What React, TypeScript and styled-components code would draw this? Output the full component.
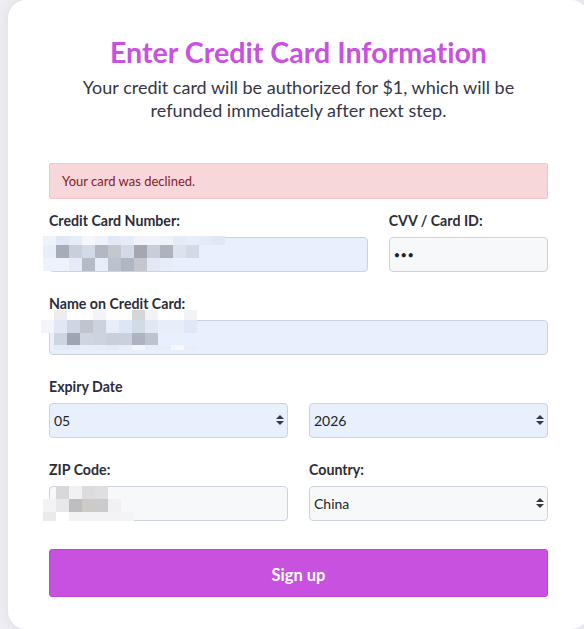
import React from "react";
import styled, { createGlobalStyle } from "styled-components";

const GlobalStyle = createGlobalStyle`
  html, body {
    margin: 0;
    padding: 0;
    height: 629px;
    overflow: hidden;
    background: #eeedf3;
    font-family: "Lato", "Open Sans", sans-serif;
    font-variant-ligatures: none;
  }
  * { box-sizing: border-box; }
`;

const Page = styled.div`
  padding-left: 8px;
  height: 629px;
`;

const Card = styled.div`
  width: 581px;
  height: 629px;
  background: #ffffff;
  border-radius: 18px;
  box-shadow: 0 0 10px rgba(90, 80, 130, 0.1);
  padding: 35px 41px 0 41px;
  display: flex;
  flex-direction: column;
`;

const Title = styled.h1`
  margin: 0;
  font-size: 28.6px;
  line-height: 34px;
  font-weight: 700;
  color: #c852df;
  text-align: center;
  font-variant-ligatures: none;
`;

const Subtitle = styled.p`
  margin: 7px 0 0;
  font-size: 18px;
  line-height: 23px;
  color: #363645;
  text-align: center;
`;

const Alert = styled.div`
  margin-top: 41px;
  height: 36px;
  display: flex;
  align-items: center;
  padding: 0 12px;
  background: #f8d7da;
  border: 1px solid #f3c4c9;
  border-radius: 2px;
  color: #842029;
  font-size: 13px;
`;

const Form = styled.form`
  margin-top: 13px;
  display: flex;
  flex-direction: column;
  gap: 23px;
`;

const Row = styled.div<{ $cols: string }>`
  display: grid;
  grid-template-columns: ${(p) => p.$cols};
  column-gap: 21px;
`;

const Field = styled.div`
  display: flex;
  flex-direction: column;
`;

const Label = styled.label`
  font-size: 14.2px;
  line-height: 17px;
  font-weight: 700;
  color: #2b2d3a;
  margin-bottom: 8px;
`;

const Control = styled.div`
  position: relative;
  height: 35px;
`;

const Input = styled.input<{ $auto?: boolean; $secret?: boolean }>`
  width: 100%;
  height: 35px;
  padding: 0 4px;
  border: 1px solid #cdd3dc;
  border-radius: 4px;
  background: ${(p) => (p.$auto ? "#e8f0fe" : "#f7f8f9")};
  font-family: "Lato", sans-serif;
  font-size: ${(p) => (p.$secret ? "11px" : "14px")};
  letter-spacing: ${(p) => (p.$secret ? "0.5px" : "normal")};
  color: #212529;
  outline: none;
`;

const Select = styled.select<{ $auto?: boolean }>`
  appearance: none;
  -webkit-appearance: none;
  width: 100%;
  height: 35px;
  padding: 0 4px;
  border: 1px solid #cdd3dc;
  border-radius: 4px;
  background: ${(p) => (p.$auto ? "#e8f0fe" : "#f7f8f9")};
  font-family: "Lato", sans-serif;
  font-size: 14px;
  color: #212529;
  outline: none;
`;

const Arrow = styled.svg`
  position: absolute;
  right: 4px;
  top: 12px;
  width: 8px;
  height: 10px;
  pointer-events: none;
`;

const Mosaic = styled.div<{ $left: number; $top: number; $rows: string }>`
  position: absolute;
  left: ${(p) => p.$left}px;
  top: ${(p) => p.$top}px;
  display: grid;
  grid-template-rows: ${(p) => p.$rows};
  pointer-events: none;
`;

const MosaicRow = styled.div`
  display: flex;
`;

const Block = styled.span<{ $c: string }>`
  width: 13px;
  height: 100%;
  background: ${(p) => p.$c};
`;

const Button = styled.button`
  margin-top: 28px;
  height: 48px;
  width: 100%;
  padding: 3px 0 0;
  border: 1px solid #bb47d2;
  border-radius: 3px;
  background: #c852df;
  color: #ffffff;
  font-family: "Lato", sans-serif;
  font-size: 16.5px;
  font-weight: 700;
`;

const SelectArrow = () => (
  <Arrow viewBox="0 0 4 5">
    <path fill="#343a40" d="M2 0L0 2h4zm0 5L0 3h4z" />
  </Arrow>
);

type MosaicData = { left: number; top: number; rows: string; data: string[][] };

const PixelMosaic = ({ left, top, rows, data }: MosaicData) => (
  <Mosaic $left={left} $top={top} $rows={rows}>
    {data.map((r, i) => (
      <MosaicRow key={i}>
        {r.map((c, j) => (
          <Block key={j} $c={c} />
        ))}
      </MosaicRow>
    ))}
  </Mosaic>
);

const T = "transparent";

const cardMosaic: MosaicData = {
  left: -6,
  top: -1,
  rows: "9px 13px 13px",
  data: [
    ["#eef2f9", "#dfe8f7", "#e7edf8", "#f5f7fb", "#eef2f9", "#e2e9f6", "#e5ecf8", "#f0f3f8", "#f0f3f8", "#eef2f9", "#e3eaf8", "#e8eef9", "#e3eaf8", "#e0e8f6"],
    ["#e8eef9", "#a6adb8", "#c9d0dc", "#d3dae6", "#b1b8c4", "#c3c7ce", "#d3dae6", "#a3a8b0", "#c7ced9", "#adb3be", "#dce2ee", "#d3d9e5"],
    ["#edf2fb", "#eef2fb", "#e5ebf7", "#b5bcc6", "#e8eef9", "#bcc3ce", "#b0b7c4", "#c3c7ce", "#e2e8f4", "#e8eef9"],
  ],
};

const nameMosaic: MosaicData = {
  left: -8,
  top: -10,
  rows: "10px 13px 12px 5px",
  data: [
    [T, "#eeecee", "#ffffff", "#ffffff", "#f2f4f7", "#ffffff", "#ffffff", "#d6d5d8", "#f1f3f6", "#ffffff", "#ffffff", "#f1f3f6"],
    ["#f3f5f9", "#e0e8f6", "#ced6e3", "#c0c4cd", "#ccd3df", "#e7edf9", "#dde6f5", "#d2dae6", "#e1e8f4", "#e7edf9", "#e7edf9", "#e0e8f7"],
    [T, "#cdd5e2", "#9ea5b0", "#cfd6e2", "#cdd4df", "#c9d0dc", "#c9d1dd", "#aeb4bf", "#bec4cd"],
    [T, "#e3eaf7", "#e3eaf7", "#e8eef9", "#e8eef9", "#e3eaf7", "#e8eef9", "#f4f6fa", "#e8eef9", "#e8eef9", "#f8f9fb", "#e8eef9"],
  ],
};

const zipMosaic: MosaicData = {
  left: -6,
  top: 0,
  rows: "13px 13px 9px",
  data: [
    [T, "#d8d8db", "#f1f1f3", "#dcdcdf", "#dfdfe2"],
    ["#f3f3f5", "#e8e8ea", "#bebdc2", "#cdcbc7", "#cbcbcf", "#f1f1f3"],
    ["#eaeaec", "#ffffff", "#f3f3f5", "#f3f3f5", "#f3f3f5", "#f3f3f5", "#f4f4f6"],
  ],
};

export default function App() {
  return (
    <>
      <GlobalStyle />
      <Page>
        <Card>
          <Title>Enter Credit Card Information</Title>
          <Subtitle>
            Your credit card will be authorized for $1, which will be
            <br />
            refunded immediately after next step.
          </Subtitle>
          <Alert>Your card was declined.</Alert>
          <Form onSubmit={(e) => e.preventDefault()}>
            <Row $cols="2fr 1fr">
              <Field>
                <Label>Credit Card Number:</Label>
                <Control>
                  <Input $auto readOnly value="" />
                  <PixelMosaic {...cardMosaic} />
                </Control>
              </Field>
              <Field>
                <Label>CVV / Card ID:</Label>
                <Control>
                  <Input $secret type="password" readOnly value="123" />
                </Control>
              </Field>
            </Row>
            <Row $cols="1fr">
              <Field>
                <Label>Name on Credit Card:</Label>
                <Control>
                  <Input $auto readOnly value="" />
                  <PixelMosaic {...nameMosaic} />
                </Control>
              </Field>
            </Row>
            <Row $cols="1fr 1fr">
              <Field>
                <Label>Expiry Date</Label>
                <Control>
                  <Select $auto defaultValue="05">
                    <option value="05">05</option>
                  </Select>
                  <SelectArrow />
                </Control>
              </Field>
              <Field>
                <Label>&nbsp;</Label>
                <Control>
                  <Select $auto defaultValue="2026">
                    <option value="2026">2026</option>
                  </Select>
                  <SelectArrow />
                </Control>
              </Field>
            </Row>
            <Row $cols="1fr 1fr">
              <Field>
                <Label>ZIP Code:</Label>
                <Control>
                  <Input readOnly value="" />
                  <PixelMosaic {...zipMosaic} />
                </Control>
              </Field>
              <Field>
                <Label>Country:</Label>
                <Control>
                  <Select defaultValue="China">
                    <option value="China">China</option>
                  </Select>
                  <SelectArrow />
                </Control>
              </Field>
            </Row>
          </Form>
          <Button type="button">Sign up</Button>
        </Card>
      </Page>
    </>
  );
}
